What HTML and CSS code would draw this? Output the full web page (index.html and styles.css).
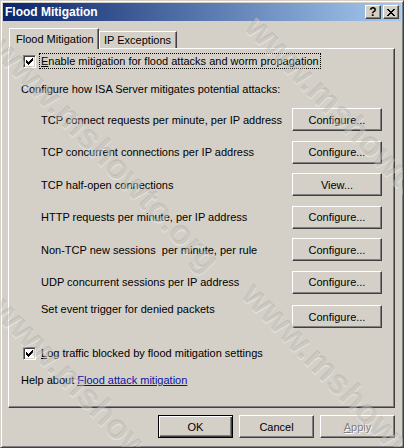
FILE: index.html
```html
<!DOCTYPE html>
<html lang="en">
  <head>
    <meta charset="UTF-8" />
    <title>Flood Mitigation</title>
    <link rel="stylesheet" href="styles.css">
  </head>
  <body>
    <div class="window">
      <div class="titlebar">
        <span class="title">Flood Mitigation</span>
        <div class="caption-buttons">
          <span class="cap-btn cap-help">?</span>
          <span class="cap-btn">
            <svg width="8" height="7" viewBox="0 0 8 7" shape-rendering="crispEdges">
              <path d="M0 0h2v1h-2zM6 0h2v1h-2zM1 1h2v1h-2zM5 1h2v1h-2zM2 2h4v1h-4zM3 3h2v1h-2zM2 4h4v1h-4zM1 5h2v1h-2zM5 5h2v1h-2zM0 6h2v1h-2zM6 6h2v1h-2z" fill="#000"/>
            </svg>
          </span>
        </div>
      </div>

      <div class="body">
        <div class="tabs">
          <span class="tab active">Flood Mitigation</span>
          <span class="tab">IP Exceptions</span>
        </div>

        <div class="panel">
          <div class="check-row">
            <span class="checkbox">
              <svg width="7" height="7" viewBox="0 0 7 7" shape-rendering="crispEdges">
                <path d="M0 2h1v3h-1zM1 3h1v3h-1zM2 4h1v3h-1zM3 3h1v3h-1zM4 2h1v3h-1zM5 1h1v3h-1zM6 0h1v3h-1z" fill="#000"/>
              </svg>
            </span>
            <span class="focus"><u>E</u>nable mitigation for flood attacks and worm propagation</span>
          </div>

          <p class="intro">Configure how ISA Server mitigates potential attacks:</p>

          <div class="settings">
            <div class="setting">
              <span class="label">TCP connect requests per minute, per IP address</span>
              <span class="btn">Configure...</span>
            </div>
            <div class="setting">
              <span class="label">TCP concurrent connections per IP address</span>
              <span class="btn">Configure...</span>
            </div>
            <div class="setting">
              <span class="label">TCP half-open connections</span>
              <span class="btn">View...</span>
            </div>
            <div class="setting">
              <span class="label">HTTP requests per minute, per IP address</span>
              <span class="btn">Configure...</span>
            </div>
            <div class="setting">
              <span class="label">Non-TCP new sessions&nbsp; per minute, per rule</span>
              <span class="btn">Configure...</span>
            </div>
            <div class="setting">
              <span class="label">UDP concurrent sessions per IP address</span>
              <span class="btn">Configure...</span>
            </div>
            <div class="setting last">
              <span class="label">Set event trigger for denied packets</span>
              <span class="btn">Configure...</span>
            </div>
          </div>

          <div class="check-row log">
            <span class="checkbox">
              <svg width="7" height="7" viewBox="0 0 7 7" shape-rendering="crispEdges">
                <path d="M0 2h1v3h-1zM1 3h1v3h-1zM2 4h1v3h-1zM3 3h1v3h-1zM4 2h1v3h-1zM5 1h1v3h-1zM6 0h1v3h-1z" fill="#000"/>
              </svg>
            </span>
            <span class="plain"><u>L</u>og traffic blocked by flood mitigation settings</span>
          </div>

          <p class="help-line">Help about <a href="#">Flood attack mitigation</a></p>
        </div>

        <div class="actions">
          <span class="btn dlg default">OK</span>
          <span class="btn dlg">Cancel</span>
          <span class="btn dlg disabled"><u>A</u>pply</span>
        </div>
      </div>

      <span class="mark mark1">www.mshowto.org</span>
      <span class="mark mark2">www.mshowto.org</span>
      <span class="mark mark3">www.mshowto.org</span>
      <span class="mark mark4">www.mshowto.org</span>
    </div>
  </body>
</html>
```

FILE: styles.css
```css
* {
  margin: 0;
  padding: 0;
  box-sizing: border-box;
}
body {
  width: 404px;
  height: 448px;
  overflow: hidden;
  font-family: "Liberation Sans", Arial, sans-serif;
  font-size: 11px;
  color: #000;
}
.window {
  position: relative;
  width: 404px;
  height: 448px;
  overflow: hidden;
  background: #d4d0c8;
  border: 1px solid;
  border-color: #d4d0c8 #404040 #404040 #d4d0c8;
  box-shadow: inset 1px 1px #fff, inset -1px -1px #808080;
  padding: 2px;
}
.titlebar {
  height: 18px;
  display: flex;
  align-items: center;
  justify-content: space-between;
  padding: 0 2px;
  background: linear-gradient(to right, #0a246a, #a6caf0);
}
.title {
  color: #fff;
  font-weight: bold;
  font-size: 12px;
}
.caption-buttons {
  display: flex;
  gap: 2px;
}
.cap-btn {
  width: 16px;
  height: 14px;
  display: flex;
  align-items: center;
  justify-content: center;
  background: #d4d0c8;
  border: 1px solid;
  border-color: #fff #404040 #404040 #fff;
  box-shadow: inset -1px -1px #808080;
}
.cap-help {
  font-weight: bold;
  font-size: 12px;
  line-height: 12px;
}
.body {
  padding: 7px 6px 0 5px;
}
.tabs {
  height: 20px;
  display: flex;
  align-items: flex-end;
  padding-left: 1px;
}
.tab {
  height: 17px;
  padding: 0 5px 0 4px;
  display: flex;
  align-items: center;
  background: #d4d0c8;
  border: 1px solid;
  border-bottom: none;
  border-color: #fff #404040 #404040 #fff;
  box-shadow: inset -1px 0 #808080;
}
.tab.active {
  position: relative;
  z-index: 1;
  width: 90px;
  height: 21px;
  margin-bottom: -1px;
  padding: 0 0 1px 6px;
}
.panel {
  height: 360px;
  border: 1px solid;
  border-color: #fff #404040 #404040 #fff;
  box-shadow: inset -1px -1px #808080;
  padding: 4px 12px 0 12px;
}
.check-row {
  height: 16px;
  display: flex;
  align-items: center;
  padding-left: 2px;
}
.checkbox {
  width: 13px;
  height: 13px;
  display: flex;
  align-items: center;
  justify-content: center;
  background: #fff;
  border: 1px solid;
  border-color: #808080 #fff #fff #808080;
  box-shadow: inset 1px 1px #404040, inset -1px -1px #d4d0c8;
  margin-right: 3px;
}
.focus {
  border: 1px dotted #000;
  padding: 0 1px;
  line-height: 14px;
}
.plain {
  padding-left: 2px;
}
.intro {
  margin-top: 13px;
  line-height: 14px;
}
.settings {
  margin-top: 12px;
  display: flex;
  flex-direction: column;
  gap: 9.5px;
}
.setting {
  display: grid;
  grid-template-columns: 1fr 90px;
  align-items: center;
  height: 23px;
}
.setting.last {
  margin-top: 2px;
}
.setting.last .label {
  align-self: start;
  margin-top: -2px;
}
.label {
  padding-left: 20px;
}
.btn {
  height: 23px;
  display: flex;
  align-items: center;
  justify-content: center;
  background: #d4d0c8;
  border: 1px solid;
  border-color: #fff #404040 #404040 #fff;
  box-shadow: inset -1px -1px #808080;
}
.log {
  margin-top: 17px;
}
.help-line {
  margin-top: 12px;
  line-height: 14px;
}
.help-line a {
  color: #1010a0;
}
.actions {
  display: flex;
  justify-content: flex-end;
  gap: 6px;
  margin-top: 7px;
}
.btn.dlg {
  width: 75px;
}
.btn.default {
  border: 1px solid #000;
  box-shadow: inset 1px 1px #fff, inset -1px -1px #404040, inset -2px -2px #808080;
}
.btn.disabled {
  color: #808080;
  text-shadow: 1px 1px #fff;
}
.mark {
  position: absolute;
  left: 0;
  top: 0;
  z-index: 5;
  pointer-events: none;
  white-space: nowrap;
  font-size: 35px;
  font-weight: bold;
  color: rgba(125, 120, 112, 0.22);
  text-shadow: 1px 1px rgba(255, 255, 255, 0.35);
  transform-origin: 0 0;
}
.mark1 {
  transform: translate(265px, 5px) rotate(46deg);
}
.mark2 {
  transform: translate(12px, 28px) rotate(46deg);
}
.mark3 {
  transform: translate(12px, 288px) rotate(46deg);
}
.mark4 {
  transform: translate(262px, 273px) rotate(46deg);
}
```
